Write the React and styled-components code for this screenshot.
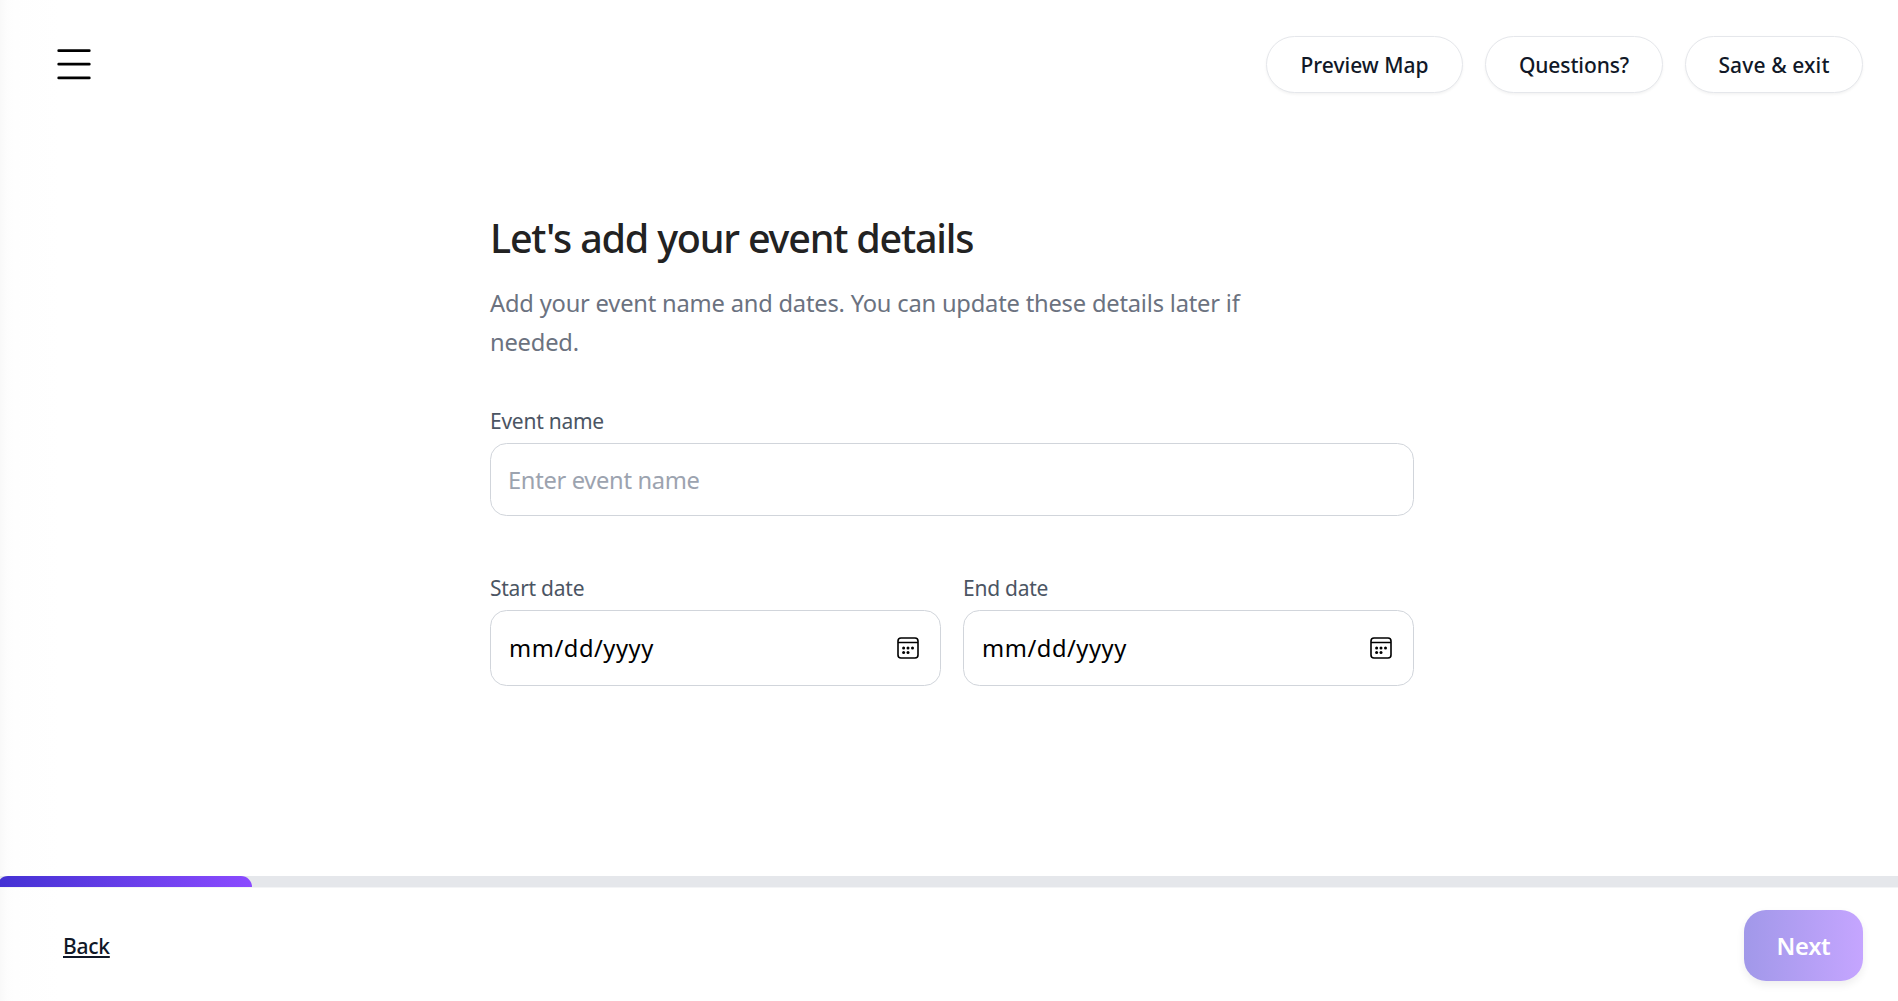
import React from "react";
import styled, { createGlobalStyle } from "styled-components";

const GlobalStyle = createGlobalStyle`
  *, *::before, *::after { box-sizing: border-box; }
  body {
    margin: 0;
    background: #fff;
    font-family: "Segoe UI", "Noto Sans", "Open Sans", sans-serif;
  }
`;

const Page = styled.div`
  display: flex;
  flex-direction: column;
  height: 100vh;
  overflow: hidden;
  background: linear-gradient(to right, #f9f9f9 0, #fdfdfd 7px, #fefefe 14px, #fff 60px);
`;

const Header = styled.header`
  display: flex;
  align-items: center;
  justify-content: space-between;
  flex: none;
  height: 129px;
  padding: 0 35px 0 57px;
`;

const MenuButton = styled.button`
  display: flex;
  padding: 0;
  border: 0;
  background: none;
  color: #000;
`;

const Actions = styled.nav`
  display: flex;
  gap: 22px;
`;

const PillButton = styled.button`
  width: ${(p) => p.$width}px;
  height: 57px;
  padding: 0;
  border: 1px solid #e5e7eb;
  border-radius: 29px;
  background: #fff;
  box-shadow: 0 1.4px 2.8px rgba(0, 0, 0, 0.05);
  color: #111827;
  font: 500 21px/30px "Noto Sans", sans-serif;
  letter-spacing: ${(p) => p.$tracking || 0}px;
`;

const Main = styled.main`
  flex: 1;
  width: 924px;
  margin: 0 auto;
  padding-top: 82px;
  transform: none;
  margin-left: 490px;
`;

const Title = styled.h1`
  margin: 0;
  font-size: 39.5px;
  font-weight: 500;
  line-height: 55px;
  letter-spacing: -1.2px;
  color: #222;
`;

const Intro = styled.p`
  width: 790px;
  margin: 18px 0 0;
  font-size: 23.7px;
  line-height: 39px;
  letter-spacing: -0.2px;
  color: #6b7280;
`;

const Form = styled.form`
  display: flex;
  flex-direction: column;
  gap: 57px;
  margin-top: 44px;
`;

const DateRow = styled.div`
  display: grid;
  grid-template-columns: 1fr 1fr;
  gap: 22px;
`;

const Field = styled.label`
  display: flex;
  flex-direction: column;
  gap: 6px;
`;

const Label = styled.span`
  font-size: 21px;
  line-height: 31px;
  letter-spacing: -0.25px;
  color: #4b5563;
`;

const TextInput = styled.input`
  width: 100%;
  height: 73px;
  padding: 0 17px;
  border: 1px solid #d1d5db;
  border-radius: 16.5px;
  outline: 0;
  background: #fff;
  font: 400 23.7px/33px "Noto Sans", sans-serif;
  letter-spacing: -0.32px;
  &::placeholder { color: #9ca3af; opacity: 1; }
`;

const DateInput = styled.div`
  display: flex;
  align-items: center;
  justify-content: space-between;
  height: 76px;
  padding: 0 21px 0 18px;
  border: 1px solid #d1d5db;
  border-radius: 16.5px;
  background: #fff;
  color: #000;
  font-size: 23.7px;
  line-height: 33px;
  letter-spacing: 0.55px;
`;

const Progress = styled.div`
  flex: none;
  height: 12px;
  border-bottom: 1px solid #f3f4f6;
  background: #e5e7eb;
`;

const ProgressFill = styled.div`
  width: 255px;
  height: 11px;
  margin-left: -3px;
  border-radius: 11px 11px 0 0;
  background: linear-gradient(to right, #4331d3, #8b4bff);
`;

const Footer = styled.footer`
  display: flex;
  align-items: flex-start;
  justify-content: space-between;
  flex: none;
  height: 113px;
  padding: 22px 35px 0 63px;
`;

const BackLink = styled.button`
  margin-top: 20px;
  padding: 0;
  border: 0;
  background: none;
  color: #111827;
  font: 500 21px/32px "Noto Sans", sans-serif;
  letter-spacing: -0.25px;
  text-decoration: underline;
  text-decoration-thickness: 2px;
  text-underline-offset: 2px;
`;

const NextButton = styled.button`
  width: 119px;
  height: 71px;
  padding: 2px 0 0;
  border: 0;
  border-radius: 22px;
  background: linear-gradient(to right, #a198e9, #c5a5ff);
  box-shadow: 0 4px 8px rgba(0, 0, 0, 0.07);
  color: #fff;
  font: 600 23.7px/33px "Noto Sans", sans-serif;
  letter-spacing: -0.3px;
`;

const MenuIcon = () => (
  <svg width="34" height="34" viewBox="0 0 34 34" fill="none" stroke="currentColor" strokeWidth="2.75" strokeLinecap="round" aria-hidden="true">
    <path d="M1.7 2.7H32.3M1.7 16.2H32.3M1.7 29.9H32.3" />
  </svg>
);

const CalendarIcon = () => (
  <svg width="22" height="22" viewBox="0 0 22 22" fill="none" aria-hidden="true">
    <rect x="1" y="1" width="20" height="20" rx="3" stroke="currentColor" strokeWidth="1.6" />
    <path d="M1 5.5H21" stroke="currentColor" strokeWidth="1.5" />
    <g fill="currentColor">
      <circle cx="6.6" cy="11" r="1.5" />
      <circle cx="11" cy="11" r="1.5" />
      <circle cx="15.5" cy="11" r="1.5" />
      <circle cx="6.6" cy="15.4" r="1.5" />
      <circle cx="11" cy="15.4" r="1.5" />
    </g>
  </svg>
);

const DateField = ({ label }) => (
  <Field as="div">
    <Label>{label}</Label>
    <DateInput>
      <span>mm/dd/yyyy</span>
      <CalendarIcon />
    </DateInput>
  </Field>
);

export default function App() {
  return (
    <>
      <GlobalStyle />
      <Page>
        <Header>
          <MenuButton aria-label="Menu"><MenuIcon /></MenuButton>
          <Actions>
            <PillButton $width={197}>Preview Map</PillButton>
            <PillButton $width={178} $tracking={-0.1}>Questions?</PillButton>
            <PillButton $width={178} $tracking={0.12}>Save &amp; exit</PillButton>
          </Actions>
        </Header>
        <Main>
          <Title>Let's add your event details</Title>
          <Intro>Add your event name and dates. You can update these details later if needed.</Intro>
          <Form>
            <Field>
              <Label>Event name</Label>
              <TextInput placeholder="Enter event name" />
            </Field>
            <DateRow>
              <DateField label="Start date" />
              <DateField label="End date" />
            </DateRow>
          </Form>
        </Main>
        <Progress><ProgressFill /></Progress>
        <Footer>
          <BackLink>Back</BackLink>
          <NextButton>Next</NextButton>
        </Footer>
      </Page>
    </>
  );
}
